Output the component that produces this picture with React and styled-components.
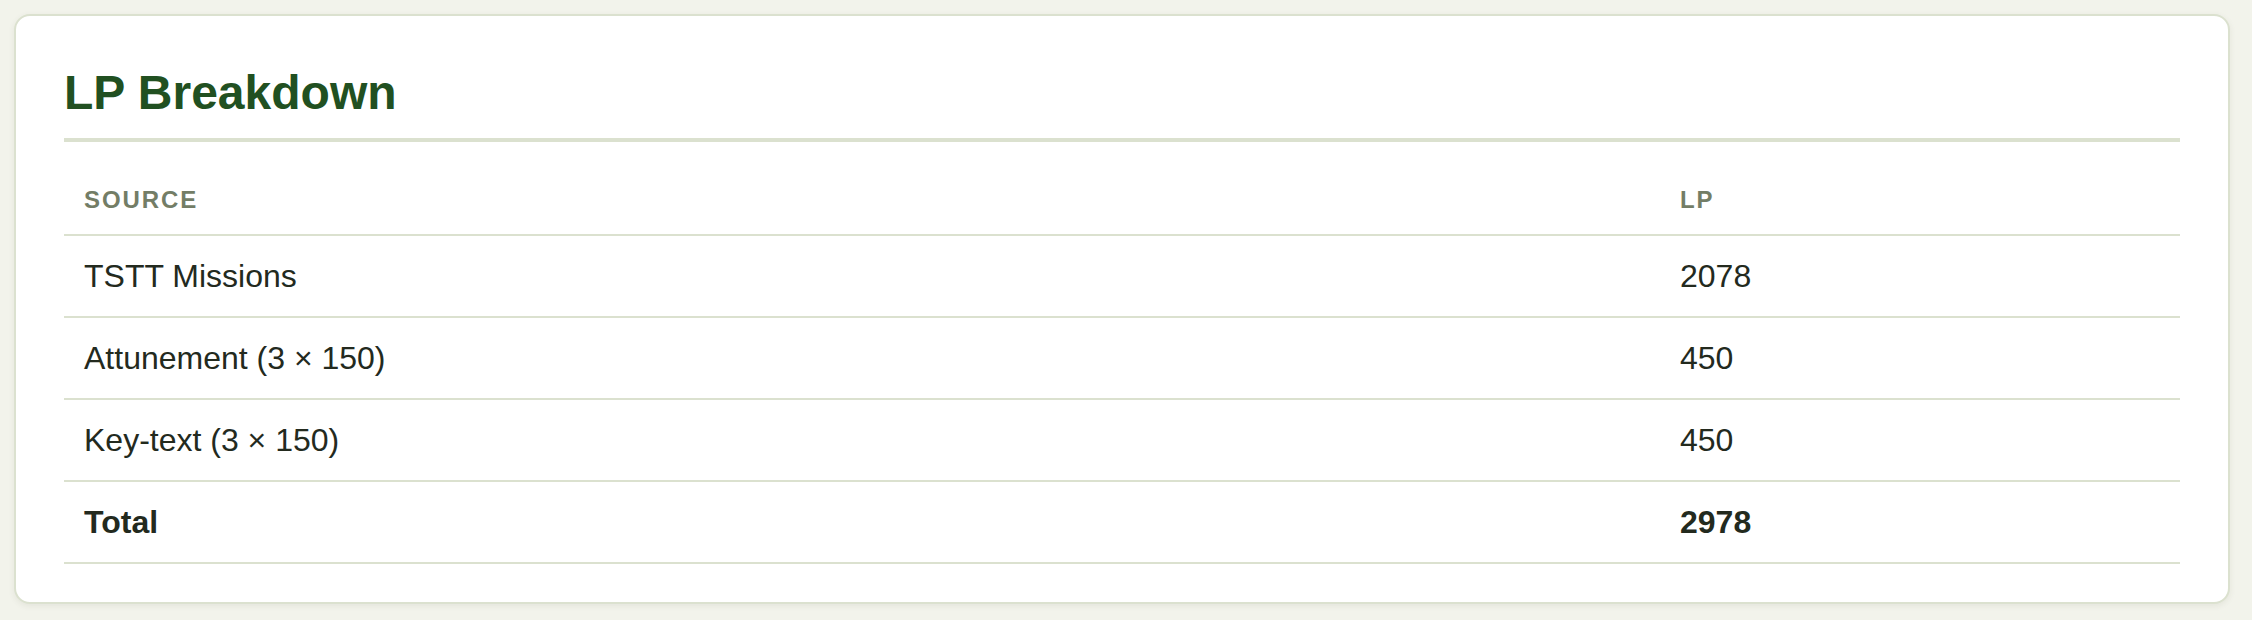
import React from 'react'
import styled, { createGlobalStyle } from 'styled-components'

const GlobalStyle = createGlobalStyle`
  body {
    margin: 0;
    background: #f2f3eb;
    font-family: "Liberation Sans", Arial, Helvetica, sans-serif;
    color: #232a1e;
  }
`

const Page = styled.div`
  padding: 14px;
`

const Card = styled.section`
  max-width: 2216px;
  box-sizing: border-box;
  background: #ffffff;
  border: 2px solid #dbe1cf;
  border-radius: 16px;
  padding: 48px 48px 38px;
  box-shadow: 0 2px 6px rgba(60, 70, 40, 0.08);
`

const Title = styled.h2`
  margin: 0 0 24px;
  padding-bottom: 16px;
  border-bottom: 4px solid #dbe1cf;
  font-size: 48px;
  line-height: 1.2;
  font-weight: 700;
  color: #215021;
`

const Table = styled.table`
  width: 100%;
  border-collapse: collapse;
`

const HeadCell = styled.th`
  width: ${p => p.$width || 'auto'};
  padding: 16px 20px;
  text-align: left;
  font-size: 24px;
  line-height: 36px;
  font-weight: 700;
  letter-spacing: 0.08em;
  text-transform: uppercase;
  color: #737d66;
  border-bottom: 2px solid #dbe1cf;
`

const Cell = styled.td`
  padding: 16px 20px;
  font-size: 32px;
  line-height: 48px;
  font-weight: ${p => (p.$strong ? 700 : 400)};
  color: #232a1e;
  border-bottom: 2px solid #dbe1cf;
`

const rows = [
  { source: 'TSTT Missions', lp: 2078 },
  { source: 'Attunement (3 × 150)', lp: 450 },
  { source: 'Key-text (3 × 150)', lp: 450 },
]

const total = rows.reduce((sum, r) => sum + r.lp, 0)

const App = () => {
  return (
    <Page>
      <GlobalStyle />
      <Card>
        <Title>LP Breakdown</Title>
        <Table>
          <thead>
            <tr>
              <HeadCell>Source</HeadCell>
              <HeadCell $width="480px">LP</HeadCell>
            </tr>
          </thead>
          <tbody>
            {rows.map(r => (
              <tr key={r.source}>
                <Cell>{r.source}</Cell>
                <Cell>{r.lp}</Cell>
              </tr>
            ))}
            <tr>
              <Cell $strong>Total</Cell>
              <Cell $strong>{total}</Cell>
            </tr>
          </tbody>
        </Table>
      </Card>
    </Page>
  )
}

export default App
